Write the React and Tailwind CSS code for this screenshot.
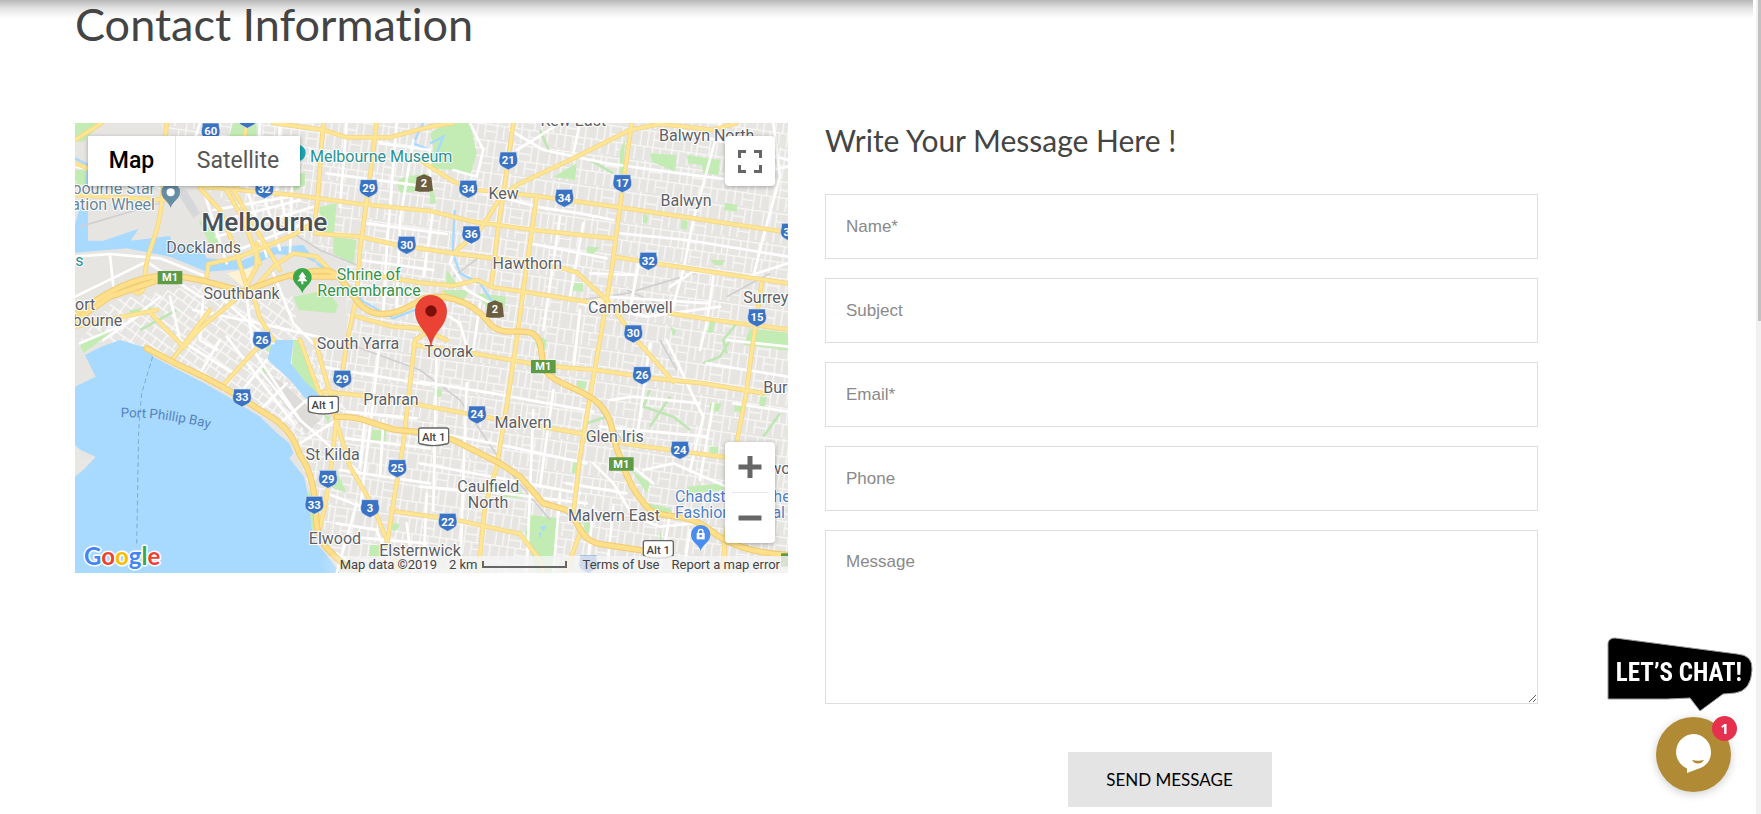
import React from "react";

/* Road geometry in map units; the viewBox is three units to the pixel. */
const MINOR_ROADS = [
  "M45 170L180 190L300 235", "M45 440L150 432L300 445L440 500", "M150 435L160 530", "M45 560L260 455", "M260 455L420 560L560 560",
  "M60 700L200 640L300 560", "M130 690L260 600", "M430 560L420 690L470 720", "M480 560L640 700", "M330 560L360 690L520 790",
  "M400 600L600 640L860 700", "M640 490L700 640L760 700", "M560 560L580 720L720 930", "M600 780L720 930L800 1000L900 1090",
  "M500 680L700 940", "M420 790L480 690", "M540 850L620 750", "M600 900L680 820", "M660 940L740 870", "M720 1000L830 930",
  "M390 130L420 39", "M460 130L480 39", "M600 39L590 230", "M660 39L650 240", "M700 100L690 430", "M860 39L840 290", "M1010 39L980 420L970 600",
  "M1060 90L1020 330L1010 610", "M1120 300L1090 500", "M800 190L1100 230", "M790 130L940 150", "M960 100L1110 120L1110 200", "M920 340L1160 372",
  "M900 450L1120 480", "M900 540L1000 560", "M460 300L690 260", "M450 340L720 270", "M470 380L760 290", "M510 430L780 320",
  "M430 240L500 460", "M560 230L620 440", "M610 250L660 420", "M660 250L690 380", "M1240 240L1440 292L1560 310L1660 330", "M1230 39L1270 120L1250 200L1180 180",
  "M1350 60L1450 120L1640 160L1860 190L2000 208", "M1370 120L1420 90L1500 39", "M1560 39L1540 130", "M1980 39L1900 330L1870 480L1830 620",
  "M2140 39L2160 200L2110 380L2080 500", "M1860 60L2184 150", "M2000 208L2184 170", "M1680 370L1880 390L2184 440", "M1410 400L1640 445",
  "M1500 320L1450 660", "M1570 340L1530 560", "M1590 490L1730 495", "M1560 580L1760 620L1980 590", "M1640 560L1950 580", "M1830 530L1900 485L2060 500L2184 460",
  "M1740 440L1710 600", "M1960 500L1940 640L1920 720", "M1560 600L1540 780", "M1180 430L1170 460L1220 540L1310 590", "M1120 590L1200 640L1220 710",
  "M1260 580L1240 720", "M1080 815L1300 850L1600 905", "M1080 960L1300 1000L1580 1060", "M1080 1060L1350 1110L1560 1150", "M1080 1130L1330 1150L1580 1180",
  "M1130 720L1120 1200", "M1220 820L1200 1389", "M1420 900L1400 1389", "M1480 840L1440 1130", "M1500 1150L1480 1389", "M1650 870L1720 860L1920 880",
  "M1770 700L1730 990", "M1820 690L1900 860L1930 920L1890 1080", "M1620 950L1940 980", "M1960 880L1920 1110", "M2000 690L2184 710", "M1940 760L2184 800",
  "M2020 880L2184 905", "M1600 1060L1660 1120L1720 1220L1800 1250L1900 1240", "M1680 1040L1780 1120", "M1750 1080L1840 1060L2000 1130", "M1600 1190L1580 1389",
  "M1660 1190L1640 1389", "M1520 1120L1700 1150", "M1830 1210L1800 1389", "M1890 1260L1870 1389", "M780 770L1110 825", "M960 690L940 870L900 1200",
  "M860 905L1070 925", "M860 985L1110 1015", "M840 1080L1110 1120", "M920 870L900 1070", "M970 930L960 1100", "M800 1150L930 1200",
  "M830 1240L950 1260L1000 1389", "M860 1280L1100 1300", "M890 1180L830 1389", "M830 1330L920 1389", "M1040 1240L1060 1389", "M1100 1150L1090 1389",
];

const MAIN_ROADS = [
  "M320 39C310 150 315 260 295 340C285 390 255 440 255 500C255 560 225 560 215 530",
  "M45 90L125 39", "M45 160L100 180", "M45 255L320 270",
  "M45 650L180 622L290 600", "M270 608L372 712", "M372 712C420 640 500 600 550 545L590 470L590 400", "M640 690L600 625L575 540",
  "M560 530L530 430L480 300L420 235", "M600 460L550 330L500 240", "M520 240L660 480", "M440 500L445 462L540 440L700 375L765 335L775 245", "M575 545L640 470L700 430L770 440L830 500",
  "M790 39L775 240", "M640 39L790 60L860 82L990 82L1110 50L1180 39", "M560 39L530 240",
  "M950 39L930 200L900 420L890 560L862 690L845 800",
  "M420 230L540 240L700 255L900 282L1110 303L1240 335L1420 360L1660 385",
  "M765 370L900 380L1010 405L1180 430L1300 445L1510 475L1550 487L1640 570L1730 690L1840 815",
  "M900 490L1080 518L1180 527L1250 510L1300 532L1390 545L1580 575",
  "M890 620L1000 650L1080 655L1160 690", "M1660 440L1800 462L1930 482L2184 520",
  "M1080 150L1180 215L1250 240L1430 258L1680 292L1900 325L2184 367",
  "M1715 39L1680 290L1655 480L1620 690L1590 860L1560 1040L1540 1210L1565 1275",
  "M1320 265L1370 225L1540 145L1710 60L1800 42L1960 60L2030 39", "M1320 265L1260 360L1180 430",
  "M1360 39L1335 220L1315 350L1295 520", "M1430 260L1390 540L1370 690L1340 890L1310 1070L1275 1190L1255 1389",
  "M1830 610L1960 630L2184 658", "M2105 520L2080 690L2060 840L2030 1000L1985 1389",
  "M1060 705L1240 730L1410 760L1520 773L1610 780L1780 805L1930 820L2110 850",
  "M790 845L940 860L1080 885L1300 925L1560 970L1720 1005L2000 1042",
  "M1010 1205L1190 1230L1380 1272L1440 1350L1450 1389", "M1560 1270L1515 1389",
  "M720 690L775 840L825 920L870 1070L940 1190L1020 1389", "M765 690L810 850L830 920",
  "M1150 550L1130 650L1065 690L1030 1000L1005 1150L980 1310", "M830 920L815 1060L795 1190L775 1270",
  "M590 715L490 825", "M450 600L340 745", "M1990 1290L2000 1389",
];

const FREEWAYS = [
  "M45 615C120 560 190 515 280 500C370 490 460 520 550 545C620 520 690 485 790 482C850 480 860 550 910 592C970 640 1050 590 1090 565C1150 550 1230 570 1280 630C1320 690 1390 650 1420 672C1460 700 1430 760 1470 797C1510 830 1560 835 1610 875C1670 930 1650 980 1680 1040C1700 1110 1730 1160 1770 1200C1820 1230 1880 1205 1950 1260C2010 1310 2090 1330 2184 1335",
  "M260 715L350 762L430 800L490 832L560 875L640 925C700 970 705 1000 720 1035C760 1090 765 1160 768 1220C770 1290 790 1310 860 1370",
  "M830 920C910 920 930 940 1000 958L1110 970L1180 990L1320 1060L1380 1100L1450 1180L1520 1200C1560 1225 1550 1300 1640 1305L1770 1325",
  "M45 632L150 560L290 512", "M700 500L830 500",
];

const PARKS = [
  "M45 39H125L70 95H45Z", "M45 180H80V225H45Z", "M520 39H590V90L500 100Z", "M720 190H735V225L700 245L690 225Z", "M780 290L830 280L822 370L775 365Z",
  "M820 380L890 390L880 465L820 430Z", "M415 330L450 350L480 400L450 405Z", "M700 560L800 540L835 585L825 610L715 600Z", "M210 600L275 590L265 612L210 618Z",
  "M1010 220C1020 190 1080 200 1110 190V240L1020 248Z", "M1110 70L1160 39H1230L1250 130L1230 200L1180 180L1110 175L1120 110Z",
  "M1110 200L1130 280L1110 280Z", "M1480 200L1550 160L1545 210Z", "M1680 120L1695 90L1690 200L1678 190Z", "M1770 130L1850 135L1845 185L1775 155Z",
  "M1880 135L1980 150L1975 195L1930 190L1925 165L1885 160Z", "M1995 278L2032 285L2030 305L1992 300Z", "M1750 310L1765 320L1760 340L1748 338Z",
  "M1865 330L1883 333L1880 360L1862 355Z", "M1580 410L1620 412L1600 432L1580 428Z", "M1160 480L1190 520H1158Z", "M1150 540L1230 540L1210 572L1150 560Z",
  "M1250 550L1340 560L1330 605L1290 605Z", "M1535 520L1570 520V545L1532 542Z", "M1950 630H1965L1958 668H1942Z", "M2070 655L2184 668V720L2050 705Z",
  "M1420 670L1460 690L1455 720L1430 712Z", "M1950 450L1995 450L1985 465H1965Z", "M700 690H720L775 830L770 850L720 820L695 770Z", "M605 770L625 785L610 805Z",
  "M650 690H660L640 735L615 720Z", "M935 960H980L975 1000H932Z", "M1110 975H1140L1135 1008H1112Z", "M790 915L812 920L805 940Z",
  "M830 1080L860 1150L810 1130Z", "M1410 1215L1500 1225L1480 1389H1430L1396 1270Z", "M1325 1130L1390 1150L1388 1165L1330 1160Z", "M1120 835H1145V860H1122Z",
  "M990 1245C1020 1230 1030 1250 1000 1265Z", "M930 1305H960V1340H928Z", "M1950 880L1985 880L1975 905H1948Z", "M2025 885L2060 890L2055 905H2022Z",
  "M2100 860L2120 860L2115 890H2098Z", "M1540 1050L1560 1055L1555 1090L1535 1088Z", "M1700 1070L1770 1120L1760 1150L1720 1090Z", "M1765 1180L1830 1195L1840 1215H1790Z",
  "M1880 1130L1990 1120L1990 1140L1890 1150Z", "M1800 1260L1815 1330H1800Z", "M745 1140L765 1180L760 1270L745 1210Z", "M1550 812L1580 815L1575 840L1550 830Z",
  "M1830 650L1850 660L1840 680Z", "M1950 1010H1975V1030H1950Z", "M1570 1240L1590 1235V1270L1575 1265Z", "M60 705L130 660L150 670L70 730Z", "M2160 690H2184V720H2150Z",
];

const SHIELDS = [
  [452, 65, "60"], [562, 27, ""], [613, 238, "32"], [926, 235, "29"], [1040, 405, "30"], [606, 691, "26"], [1345, 152, "21"], [1225, 237, "34"],
  [1513, 264, "34"], [1234, 374, "36"], [1687, 220, "17"], [1765, 453, "32"], [2190, 366, "32"], [2091, 623, "15"], [1720, 671, "30"], [546, 863, "33"],
  [847, 807, "29"], [804, 1107, "29"], [763, 1185, "33"], [930, 1195, "3"], [1012, 1075, "25"], [1251, 914, "24"], [1746, 796, "26"], [1860, 1020, "24"], [1163, 1236, "22"],
  [1585, 1362, ""],
];

const LABELS = [
  [431, 428, "Docklands"], [545, 567, "Southbank"], [45, 600, "ort", "start"], [38, 648, "bourne", "start"], [894, 716, "South Yarra"], [1331, 267, "Kew"],
  [1540, 48, "Kew East"], [1940, 92, "Balwyn North"], [1878, 289, "Balwyn"], [1402, 478, "Hawthorn"], [1711, 610, "Camberwell"], [2050, 580, "Surrey", "start"],
  [1166, 740, "Toorak"], [993, 885, "Prahran"], [818, 1049, "St Kilda"], [825, 1303, "Elwood"], [1080, 1339, "Elsternwick"], [1389, 955, "Malvern"],
  [1664, 995, "Glen Iris"], [1285, 1145, "Caulfield"], [1284, 1195, "North"], [1662, 1233, "Malvern East"], [2110, 848, "Bur", "start"], [2128, 1092, "wood", "start"],
];

function Shield({ x, y, n }) {
  return (
    <g transform={`translate(${x} ${y})`}>
      <path d="M-25-26H25C24-14 29-8 28 2C27 18 13 20 0 28C-13 20-27 18-28 2C-29-8-24-14-25-26Z" fill="#3a72c4" stroke="#dfe8f4" strokeWidth="2" />
      <text y="11" textAnchor="middle" fontSize="34" fontWeight="700" fill="#fff">{n}</text>
    </g>
  );
}

function MapCanvas() {
  return (
    <svg viewBox="45 39 2139 1350" preserveAspectRatio="xMidYMid slice" className="block h-full w-full font-[Roboto,'Liberation_Sans',sans-serif]" role="img" aria-label="Map of Melbourne">
      <defs>
        <pattern id="streets" width="132" height="96" patternUnits="userSpaceOnUse" patternTransform="rotate(8)">
          <path d="M0 8H132M0 56H132M22 8V56M44 0V56M61 8V96M84 56V96M98 8V56M119 0V96M8 56V96M36 56V96M61 33H98M84 76H119" stroke="#f8f8f7" strokeWidth="4" fill="none" />
        </pattern>
        <pattern id="lanes" width="78" height="54" patternUnits="userSpaceOnUse" patternTransform="rotate(36)">
          <path d="M0 6H78M0 32H78M12 6V32M34 0V54M56 6V32M70 32V54" stroke="#fafafa" strokeWidth="4" fill="none" />
        </pattern>
        <path id="bay" d="M182 922C280 920 370 935 460 958" />
      </defs>
      <rect x="45" y="39" width="2139" height="1350" fill="#e7e5e2" />
      <path d="M300 39H2184V1389H840L700 1000L620 760L860 690V460L420 230Z" fill="url(#streets)" />
      <path d="M160 570L440 520L700 560L720 700L860 900L720 980L480 840L260 710L60 690Z" fill="url(#lanes)" />
      <path d="M500 490L560 540L590 470Z" fill="#fff2d5" />
      <path d="M1600 570L1660 530L1660 600Z" fill="#fff2d5" />
      {PARKS.map((d) => <path key={d} d={d} fill="#c3ecb4" />)}

      <g fill="#a8d9ff">
        <path d="M120 712L180 690L262 715L280 740L350 778L430 818L500 858L600 920L650 968L688 1000L700 1030L688 1045L732 1100L745 1160L752 1230L760 1290L800 1335L840 1389H45V1100L70 1080L107 1040L62 1020L45 1005V830L107 800L75 735Z" />
        <path d="M60 290H84V392L130 392L236 356L212 392L330 378L335 400L420 405L440 445L545 452L640 412L730 405L775 462L730 440L650 432L560 476L440 485L330 440L200 415L45 428V345Z" />
        <path d="M640 690H700L692 760L735 815L788 865L775 890L740 870L690 810L622 748Z" />
        <path d="M1440 1250L1460 1245L1450 1265ZM1435 1270L1445 1268L1440 1285Z" />
      </g>
      <path d="M45 1010L75 1045L105 1040L45 1098Z" fill="#e9e7e4" />
      <path d="M600 790C640 790 690 830 780 930L740 970Z" fill="#dedcd9" />
      <path d="M340 230L380 240L420 310L400 325Z" fill="#d5d7da" />
      <g fill="none" stroke="#a8d9ff" strokeWidth="7">
        <path d="M45 145L85 165L80 225" />
        <path d="M1184 300L1178 430L1200 490L1260 520L1300 580M770 460L860 520L910 575L1000 625L1090 590L1150 560" />
        <path d="M1090 39L1060 100L1110 120M1110 100L1150 80L1130 130" />
      </g>
      <g fill="none" stroke="#c0e6b3" strokeWidth="8">
        <path d="M1440 60L1470 130M1590 150L1660 190M1770 840L1750 890L1840 920L1890 960M1930 760L1980 740L2010 690M2030 640L1990 690L2000 730M1770 950L1830 860M2110 980L2160 910M1580 940L1640 920M240 660L350 600" />
      </g>
      <g fill="none" stroke="#d0d0d2" strokeWidth="5">
        <path d="M60 350L330 270M650 340L780 420L890 465M1080 780L1200 870L1320 1050L1470 1230M1560 570L1700 550L1930 482M1700 540L1790 580M1800 690L1850 780M860 700L1080 780M1180 500L1260 440M2000 560L2130 490M1600 870L1700 1010" />
      </g>

      <g fill="none" strokeLinejoin="round" strokeLinecap="round">
        <g stroke="#fff" strokeWidth="8">{MINOR_ROADS.map((d) => <path key={d} d={d} />)}</g>
        <g stroke="#f6d684" strokeWidth="14">{MAIN_ROADS.map((d) => <path key={d} d={d} />)}</g>
        <g stroke="#fee695" strokeWidth="9">{MAIN_ROADS.map((d) => <path key={d} d={d} />)}</g>
        <g stroke="#f1ca70" strokeWidth="19">{FREEWAYS.map((d) => <path key={d} d={d} />)}</g>
        <g stroke="#fee08a" strokeWidth="13">{FREEWAYS.map((d) => <path key={d} d={d} />)}</g>
      </g>
      <path d="M278 740L245 850L236 960L230 1310" fill="none" stroke="#7fa9d6" strokeWidth="3" strokeDasharray="14 9" />

      {SHIELDS.map(([x, y, n]) => <Shield key={`${x}-${y}`} x={x} y={y} n={n} />)}
      {[[330, 503], [1450, 770], [1684, 1062], [2200, 1350]].map(([x, y]) => (
        <g key={x}>
          <rect x={x - 37} y={y - 20} width="74" height="40" rx="2" fill="#5f9a45" />
          {x < 2184 && <text x={x} y={y + 11} textAnchor="middle" fontSize="33" fontWeight="700" fill="#fff">M1</text>}
        </g>
      ))}
      {[[790, 885], [1121, 980], [1795, 1318]].map(([x, y]) => (
        <g key={x}>
          <path d={`M${x - 45} ${y - 20}Q${x - 45} ${y - 26} ${x - 38} ${y - 26}H${x + 38}Q${x + 45} ${y - 26} ${x + 45} ${y - 20}V${y + 15}Q${x + 45} ${y + 21} ${x + 37} ${y + 22}Q${x} ${y + 32} ${x - 37} ${y + 22}Q${x - 45} ${y + 21} ${x - 45} ${y + 15}Z`} fill="#fff" stroke="#666" strokeWidth="4" />
          <text x={x} y={y + 13} textAnchor="middle" fontSize="34" fontWeight="500" fill="#444">Alt 1</text>
        </g>
      ))}
      {[[1092, 221], [1305, 599]].map(([x, y]) => (
        <g key={x}>
          <path d={`M${x} ${y - 28}L${x + 22} ${y - 19}L${x + 27} ${y + 21}Q${x} ${y + 28} ${x - 27} ${y + 21}L${x - 22} ${y - 19}Z`} fill="#6b5d40" />
          <text x={x} y={y + 11} textAnchor="middle" fontSize="33" fontWeight="700" fill="#fff">2</text>
        </g>
      ))}

      <g fontSize="48" paintOrder="stroke" stroke="#fff" strokeWidth="6" strokeLinejoin="round">
        <g fill="#5b6067">
          {LABELS.map(([x, y, t, anchor]) => <text key={`${t}${x}`} x={x} y={y} textAnchor={anchor || "middle"}>{t}</text>)}
          <text x="613" y="362" textAnchor="middle" fontSize="79" fontWeight="500" fill="#4a5058">Melbourne</text>
        </g>
        <g fill="#66869a">
          <text x="285" y="252" textAnchor="end">Melbourne Star</text>
          <text x="285" y="301" textAnchor="end">Observation Wheel</text>
        </g>
        <g fill="#2a9092">
          <text x="750" y="157">Melbourne Museum</text>
          <text x="46" y="468">s</text>
        </g>
        <g fill="#36914a">
          <text x="926" y="510" textAnchor="middle">Shrine of</text>
          <text x="927" y="558" textAnchor="middle">Remembrance</text>
        </g>
        <g fill="#4f7fc6">
          <text x="1845" y="1176">Chadstone - The</text>
          <text x="1845" y="1224">Fashion Capital</text>
        </g>
      </g>
      <text fontSize="40" fill="#5583bd"><textPath href="#bay">Port Phillip Bay</textPath></text>

      <circle cx="712" cy="129" r="25" fill="#18a5b4" />
      <path d="M332 293C326 273 304 268 304 246A28 28 0 0 1 360 246C360 268 338 273 332 293Z" fill="#668da3" />
      <circle cx="332" cy="247" r="12" fill="#fff" />
      <path d="M727 550C720 528 699 524 699 502A28 28 0 0 1 755 502C755 524 734 528 727 550Z" fill="#3aa648" />
      <path d="M727 485L715 502H721L712 514H724V523H730V514H742L733 502H739Z" fill="#fff" />
      <path d="M1922 1322C1915 1300 1893 1297 1893 1274A29 29 0 0 1 1951 1274C1951 1297 1929 1300 1922 1322Z" fill="#4a8df0" />
      <path d="M1915 1270V1265A7 7 0 0 1 1929 1265V1270" fill="none" stroke="#fff" strokeWidth="4" />
      <path d="M1910 1269H1934V1288H1910Z" fill="#fff" />
      <circle cx="1922" cy="1278" r="4" fill="#4a8df0" />
      <path d="M1113 709C1108 665 1066 650 1066 603A47 47 0 0 1 1160 603C1160 650 1118 665 1113 709Z" fill="#ea4335" stroke="#d6392c" strokeWidth="2" />
      <circle cx="1113" cy="603" r="17" fill="#7d0f0a" />
    </svg>
  );
}

function Field({ id, label, type = "text" }) {
  return (
    <div>
      <label htmlFor={id} className="sr-only">{label}</label>
      <input id={id} type={type} placeholder={label} className="block h-[65px] w-full border border-[#dedede] bg-white px-5 text-[17px] text-[#444] outline-none placeholder:text-[#8a8a8a]" />
    </div>
  );
}

function MapPanel() {
  return (
    <section aria-label="Location" className="relative h-[450px] overflow-hidden font-[Roboto,'Liberation_Sans',sans-serif]">
      <MapCanvas />
      <div className="absolute left-[13px] top-[13px] flex h-[50px] bg-white text-[23px] shadow-[0_1px_4px_rgba(0,0,0,0.3)]">
        <button type="button" className="w-[88px] border-r border-[#e6e6e6] font-medium text-black">Map</button>
        <button type="button" className="w-[124px] text-[#565656]">Satellite</button>
      </div>
      <button type="button" aria-label="Toggle fullscreen view" className="absolute right-[13px] top-[13px] flex size-[50px] items-center justify-center rounded-sm bg-white shadow-[0_1px_4px_rgba(0,0,0,0.3)]">
        <svg width="24" height="23" viewBox="0 0 24 23" fill="none" stroke="#666" strokeWidth="3"><path d="M1.500 8V1.500H8M16 1.500H22.500V8M22.500 15V21.500H16M8 21.500H1.500V15" /></svg>
      </button>
      <div className="absolute bottom-[30px] right-[13px] flex w-[50px] flex-col items-center rounded-sm bg-white shadow-[0_1px_4px_rgba(0,0,0,0.3)]">
        <button type="button" aria-label="Zoom in" className="flex h-[50px] w-full items-center justify-center">
          <svg width="24" height="24" viewBox="0 0 24 24" fill="#666"><path d="M9.500 1H14.500V9.500H23.500V14.500H14.500V23H9.500V14.500H.5V9.500H9.500Z" /></svg>
        </button>
        <div className="h-px w-9 bg-[#e6e6e6]" />
        <button type="button" aria-label="Zoom out" className="flex h-[50px] w-full items-center justify-center">
          <svg width="24" height="24" viewBox="0 0 24 24" fill="#666"><path d="M.5 9.500H23.500V14.500H.5Z" /></svg>
        </button>
      </div>
      <a href="#google" aria-label="Google" className="absolute bottom-0 left-[8px]">
        <svg width="84" height="32" viewBox="0 0 84 32" className="block">
          <text x="1" y="24" fontSize="24" fontWeight="700" paintOrder="stroke" stroke="#fff" strokeWidth="3" strokeLinejoin="round" className="font-[Lato,sans-serif]">
            <tspan fill="#4285f4">G</tspan><tspan fill="#ea4335">o</tspan><tspan fill="#fbbc05">o</tspan><tspan fill="#4285f4">g</tspan><tspan fill="#34a853">l</tspan><tspan fill="#ea4335">e</tspan>
          </text>
        </svg>
      </a>
      <div className="absolute bottom-0 right-0 flex h-[17px] items-center gap-3 bg-linear-to-r from-[#f5f5f5]/0 to-[#f5f5f5]/80 to-10% pl-5 pr-2 text-[13px] leading-[17px] text-[#444]">
        <span>Map data ©2019</span>
        <span className="flex items-center gap-1">2 km<i className="block h-[7px] w-[85px] border-2 border-t-0 border-[#666]" /></span>
        <a href="#terms" className="ml-1">Terms of Use</a>
        <a href="#report">Report a map error</a>
      </div>
    </section>
  );
}

function ChatWidget() {
  return (
    <aside aria-label="Live chat" className="fixed bottom-0 right-[5px] flex flex-col items-end pb-[22px] pr-[3px]">
      <svg width="146" height="76" viewBox="0 0 146 76" className="block" role="img" aria-label="Let's chat!">
        <path d="M1 62V6Q2 1 8 1L130 17Q146 18 145 33Q144 54 128 56L116 57L93 74L83 61L60 62Z" fill="#000" stroke="#999" strokeWidth="1" />
        <text x="72" y="44" textAnchor="middle" fontSize="25" fontWeight="700" fill="#fff" className="font-['Liberation_Sans_Narrow','Roboto_Condensed','Open_Sans_Condensed','DejaVu_Sans_Condensed',sans-serif]">LET’S CHAT!</text>
      </svg>
      <button type="button" aria-label="Open chat, 1 unread message" className="relative mr-[22px] mt-1 block size-[75px] rounded-full bg-[#b08a35] shadow-[0_2px_10px_rgba(0,0,0,0.2)]">
        <svg width="75" height="75" viewBox="0 0 75 75" className="block">
          <path d="M37 17A18 18 0 0 1 55 35C55 44 50 49 43 51.500L31 56L31 51.500A18 18 0 0 1 37 17Z" fill="#fff" />
          <path d="M36 43Q42 44.500 48 43Q46 46.500 42 46.500Q38 46.500 36 43Z" fill="#b08a35" />
        </svg>
        <span className="absolute -right-[6px] -top-[1px] flex size-[25px] items-center justify-center rounded-full bg-[#e5304e] font-['Open_Sans',sans-serif] text-[15px] font-bold text-white">1</span>
      </button>
    </aside>
  );
}

export default function App() {
  return (
    <div className="relative min-h-screen bg-white pr-[5px] font-[Lato,sans-serif] text-[#444]">
      <div className="absolute left-0 right-[8px] top-0 h-[18px] bg-linear-to-b from-[#b8b8b8] via-[#e2e2e2] via-45% to-transparent" />
      <main className="relative pb-[7px] pl-[75px] pr-[218px]">
        <h1 className="h-[123px] text-[45px] leading-[48px] [font-variant-ligatures:none]">Contact Information</h1>
        <div className="grid grid-cols-2 gap-[37px]">
          <MapPanel />
          <form onSubmit={(e) => e.preventDefault()}>
            <h2 className="mb-[37px] text-[30px] leading-[34px]">Write Your Message Here !</h2>
            <div className="flex flex-col gap-[19px] font-['Liberation_Sans',Arial,sans-serif]">
              <Field id="name" label="Name*" />
              <Field id="subject" label="Subject" />
              <Field id="email" label="Email*" type="email" />
              <Field id="phone" label="Phone" type="tel" />
              <div>
                <label htmlFor="message" className="sr-only">Message</label>
                <textarea id="message" placeholder="Message" className="block h-[174px] w-full resize border border-[#dedede] bg-white px-5 py-[19px] text-[17px] leading-[24px] outline-none placeholder:text-[#8a8a8a]" />
              </div>
            </div>
            <div className="mt-12 flex justify-center pr-6">
              <button type="submit" className="h-[55px] w-[204px] bg-[#e4e4e4] text-[17px] text-black">SEND MESSAGE</button>
            </div>
          </form>
        </div>
      </main>
      <ChatWidget />
      <div aria-hidden="true" className="absolute inset-y-0 right-0 w-[5px] bg-[#f1f1f1] pl-[2px]">
        <div className="h-[321px] bg-[#c1c1c1]" />
      </div>
    </div>
  );
}
